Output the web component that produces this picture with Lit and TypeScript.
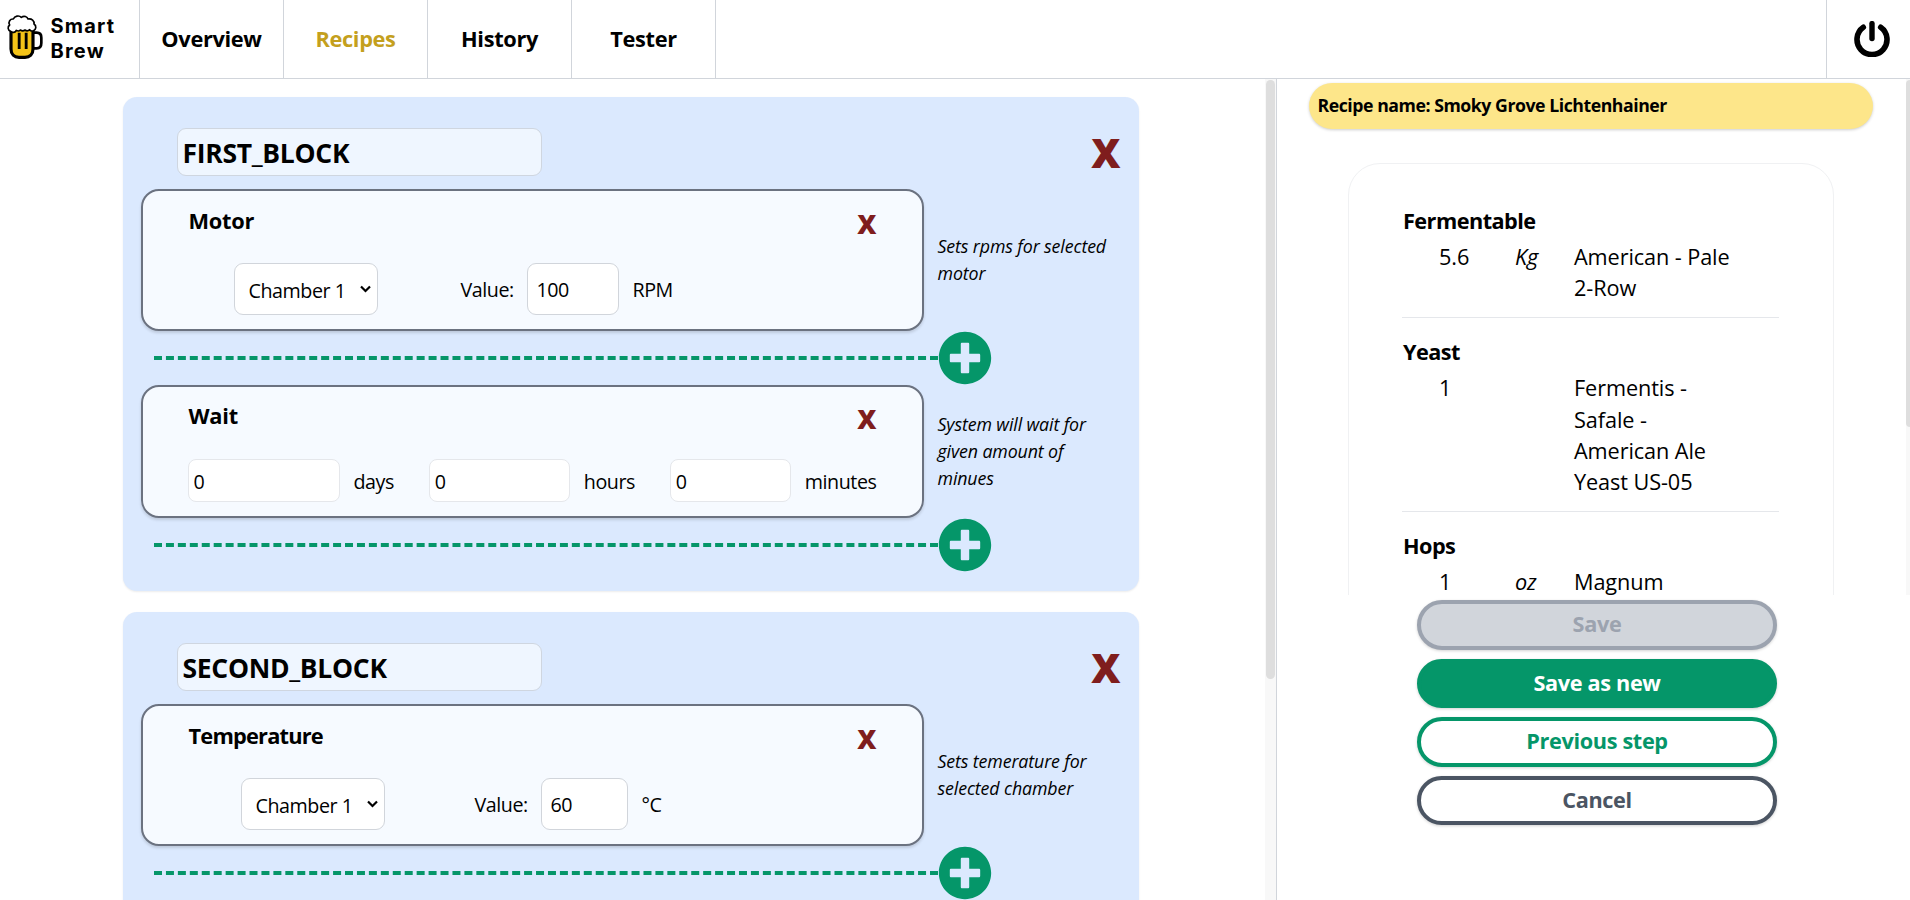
import { LitElement, html, css, svg, nothing } from "lit";
import { customElement, property } from "lit/decorators.js";
import { classMap } from "lit/directives/class-map.js";

type Field = { value: string; unit: string; size: string };
type Step = {
  title: string;
  kind: "motor" | "temperature" | "wait";
  note: string;
  fields: Field[];
};
type Block = { name: string; steps: Step[] };
type Ingredient = { group: string; amount: string; unit: string; name: string };

const blocks: Block[] = [
  {
    name: "FIRST_BLOCK",
    steps: [
      {
        title: "Motor",
        kind: "motor",
        note: "Sets rpms for selected motor",
        fields: [{ value: "100", unit: "RPM", size: "l" }],
      },
      {
        title: "Wait",
        kind: "wait",
        note: "System will wait for given amount of minues",
        fields: [
          { value: "0", unit: "days", size: "l" },
          { value: "0", unit: "hours", size: "m" },
          { value: "0", unit: "minutes", size: "s" },
        ],
      },
    ],
  },
  {
    name: "SECOND_BLOCK",
    steps: [
      {
        title: "Temperature",
        kind: "temperature",
        note: "Sets temerature for selected chamber",
        fields: [{ value: "60", unit: "°C", size: "s" }],
      },
    ],
  },
];

const ingredients: Ingredient[] = [
  { group: "Fermentable", amount: "5.6", unit: "Kg", name: "American - Pale 2-Row" },
  { group: "Yeast", amount: "1", unit: "", name: "Fermentis - Safale - American Ale Yeast US-05" },
  { group: "Hops", amount: "1", unit: "oz", name: "Magnum" },
];

const mug = svg`
  <path d="M102 98 h8 c9 0 14 6 14 15 v16 c0 10 -5 16 -14 16 h-10" fill="none" stroke="#000" stroke-width="8"/>
  <path d="M33 84 h66 v63 c0 16 -10 25 -24 25 h-18 c-14 0 -24 -9 -24 -25 z" fill="#f3c318" stroke="#000" stroke-width="9.500"/>
  <path d="M57.500 98 v49 M78.500 98 v49" fill="none" stroke="#000" stroke-width="8.500"/>
  <path d="M32 94 c-9 -3 -10 -14 -3 -19 c-6 -9 2 -19 11 -18 c4 -9 17 -12 24 -5 c8 -6 18 -2 20 5 c11 -2 20 6 18 15 c8 5 7 17 -2 20 c-5 2 -9 0 -11 -3 c-4 4 -10 4 -14 1 c-5 4 -10 3 -14 0 c-4 4 -9 3 -12 1 c-3 7 -12 8 -17 3 z" fill="#fff" stroke="#000" stroke-width="5" stroke-linejoin="round"/>`;

@customElement("app-header")
class AppHeader extends LitElement {
  static styles = css`
    :host {
      display: flex;
      height: 78px;
      border-bottom: 1px solid #d1d5db;
      background: #fff;
    }
    .logo {
      box-sizing: border-box;
      display: flex;
      align-items: flex-start;
      width: 140px;
      padding-top: 13px;
      border-right: 1px solid #d1d5db;
    }
    .logo svg {
      width: 44px;
      height: 48px;
    }
    .brand {
      margin: 1px 0 0 6.500px;
      font: 700 20px/25px Inter, sans-serif;
      letter-spacing: 1.200px;
    }
    .tab {
      box-sizing: border-box;
      width: 144px;
      border-right: 1px solid #d1d5db;
      line-height: 77px;
      text-align: center;
      font-weight: 700;
      font-size: 21.800px;
      letter-spacing: -0.350px;
    }
    .active {
      color: #c4a01d;
    }
    .power {
      display: flex;
      align-items: flex-start;
      margin-left: auto;
      width: 83px;
      border-left: 1px solid #d1d5db;
    }
    .power svg {
      width: 36px;
      height: 36px;
      margin: 21px 0 0 27px;
    }
  `;
  render() {
    return html`
      <div class="logo">
        <svg viewBox="0 39 132 144">${mug}</svg>
        <p class="brand">Smart<br />Brew</p>
      </div>
      ${["Overview", "Recipes", "History", "Tester"].map(
        (t) => html`<div class=${classMap({ tab: true, active: t === "Recipes" })}>${t}</div>`
      )}
      <div class="power">
        <svg viewBox="0 0 36 36" fill="none" stroke="#000" stroke-linecap="round">
          <path d="M9.300 6.300 A15 15 0 1 0 26.700 6.300" stroke-width="5.600" />
          <path d="M18 2.600 V17.500" stroke-width="5.400" />
        </svg>
      </div>
    `;
  }
}

@customElement("step-row")
class StepRow extends LitElement {
  @property({ attribute: false }) step!: Step;
  static styles = css`
    :host {
      display: block;
    }
    .top {
      display: flex;
      align-items: center;
    }
    .card {
      box-sizing: border-box;
      width: 783px;
      height: 142px;
      padding: 12px 45px 0;
      border: 2px solid #6b7280;
      border-radius: 18px;
      background: #f6faff;
      box-shadow: 0 2px 3px rgba(0, 0, 0, 0.14);
    }
    .card.wait {
      height: 133px;
      padding-top: 11px;
    }
    .head {
      display: flex;
      justify-content: space-between;
      height: 36px;
      padding-left: 1px;
      line-height: 35px;
      font-weight: 700;
      font-size: 21.800px;
      letter-spacing: -0.250px;
    }
    .temperature .head {
      letter-spacing: -0.800px;
    }
    .remove {
      color: #7f1d1d;
      font-weight: 800;
      font-size: 26.600px;
      line-height: 43px;
      letter-spacing: 0;
    }
    .fields {
      display: flex;
      align-items: center;
      margin-top: 24px;
      font-size: 19.700px;
      letter-spacing: -0.450px;
    }
    .motor .fields {
      padding-left: 46px;
    }
    .temperature .fields {
      padding-left: 53px;
    }
    .wait .fields {
      justify-content: space-between;
      margin-top: 25px;
    }
    .select {
      box-sizing: border-box;
      display: flex;
      align-items: center;
      justify-content: space-between;
      width: 144px;
      height: 52px;
      padding: 2px 6px 0 14px;
      border: 1px solid #d1d5db;
      border-radius: 9px;
      background: #fff;
    }
    .select svg {
      width: 11px;
      height: 8px;
      margin-bottom: 3px;
    }
    .label {
      width: 53px;
      margin: 0 13px 0 83px;
      white-space: nowrap;
    }
    .temperature .label {
      margin: 0 13px 0 90px;
    }
    .field {
      display: flex;
      align-items: center;
      gap: 14px;
    }
    input {
      box-sizing: border-box;
      height: 52px;
      margin: 0;
      padding: 0 9px;
      border: 1px solid #d1d5db;
      border-radius: 9px;
      background: #fff;
      color: #000;
      font: inherit;
      letter-spacing: inherit;
      outline: none;
    }
    .l {
      width: 92px;
    }
    .s {
      width: 87px;
    }
    .wait input {
      height: 43px;
      padding: 1px 5px 0;
      border-color: #e5e7eb;
      border-radius: 8px;
    }
    .wait .field span {
      padding-top: 1px;
    }
    .wait .l {
      width: 152px;
    }
    .wait .m {
      width: 141px;
    }
    .wait .s {
      width: 121px;
    }
    .note {
      width: 178px;
      margin: 0 0 0 14px;
      font-size: 17.800px;
      line-height: 27px;
      font-style: italic;
      letter-spacing: -0.120px;
    }
    .add {
      display: flex;
      align-items: center;
      height: 54px;
      padding-left: 13px;
    }
    .dash {
      width: 784px;
      border-top: 4px dashed #059669;
    }
    .add svg {
      width: 54px;
      height: 54px;
      fill: #059669;
    }
  `;
  render() {
    const { title, kind, note, fields } = this.step;
    return html`
      <div class="top">
        <div class="card ${kind}">
          <div class="head"><span>${title}</span><span class="remove">X</span></div>
          <div class="fields">
            ${kind === "wait"
              ? nothing
              : html`<div class="select">
                    <span>Chamber 1</span>
                    <svg viewBox="0 0 11 8" fill="none" stroke="#000" stroke-width="2.200">
                      <path d="M1 1.500 L5.500 6 L10 1.500" />
                    </svg>
                  </div>
                  <span class="label">Value:</span>`}
            ${fields.map(
              (f) => html`<div class="field"><input class=${f.size} .value=${f.value} /><span>${f.unit}</span></div>`
            )}
          </div>
        </div>
        <p class="note">${note}</p>
      </div>
      <div class="add">
        <div class="dash"></div>
        <svg viewBox="0 0 512 512">
          <path
            d="M256 8C119 8 8 119 8 256s111 248 248 248 248-111 248-248S393 8 256 8zm144 276c0 6.600-5.400 12-12 12h-92v92c0 6.600-5.400 12-12 12h-56c-6.600 0-12-5.400-12-12v-92h-92c-6.600 0-12-5.400-12-12v-56c0-6.600 5.400-12 12-12h92v-92c0-6.600 5.400-12 12-12h56c6.600 0 12 5.400 12 12v92h92c6.600 0 12 5.400 12 12v56z"
          />
        </svg>
      </div>
    `;
  }
}

@customElement("recipe-panel")
class RecipePanel extends LitElement {
  static styles = css`
    :host {
      display: flex;
      flex-direction: column;
      min-height: 0;
    }
    .info {
      display: flex;
      height: 516px;
      overflow: hidden;
    }
    .content {
      flex: 1;
      padding-top: 4px;
    }
    .name {
      box-sizing: border-box;
      width: 564px;
      height: 46px;
      margin-left: 31.500px;
      padding-left: 9px;
      border-radius: 23px;
      background: #fde68a;
      box-shadow: 0 1px 3px rgba(0, 0, 0, 0.2);
      font-weight: 700;
      font-size: 17.700px;
      line-height: 45px;
      letter-spacing: -0.460px;
    }
    .list {
      box-sizing: border-box;
      width: 486px;
      height: 600px;
      margin: 34px 0 0 71px;
      padding: 23px 54px 0 53px;
      border: 1px solid #f0f1f3;
      border-radius: 32px;
    }
    .group {
      padding: 17.500px 0 13.500px;
      border-bottom: 1px solid #e5e7eb;
      font-size: 21.700px;
      line-height: 31.400px;
    }
    .group h3 {
      margin: 0 0 5px;
      padding-left: 1px;
      font-size: inherit;
      font-weight: 700;
      letter-spacing: -0.550px;
    }
    .line {
      display: grid;
      grid-template-columns: 76px 59px 165px;
      padding-left: 37px;
      letter-spacing: -0.100px;
    }
    .unit {
      font-style: italic;
    }
    .track {
      width: 4px;
      background: #f8f8f8;
    }
    .thumb {
      height: 347px;
      margin-top: 1px;
      border-radius: 5px 0 0 5px;
      background: #dedede;
    }
    .buttons {
      display: flex;
      flex-direction: column;
      gap: 9px;
      width: 360px;
      margin: 5px 0 0 140px;
    }
    button {
      box-sizing: border-box;
      height: 49.500px;
      padding: 0 0 1px;
      border: 4px solid;
      border-radius: 25px;
      background: #fff;
      box-shadow: 0 1px 3px rgba(0, 0, 0, 0.18);
      font: inherit;
      font-weight: 700;
      font-size: 21.700px;
      line-height: 1;
      letter-spacing: -0.350px;
    }
    .save {
      border-color: #9ca3af;
      background: #d1d5db;
      color: #9ca3af;
    }
    .new {
      border-color: #059669;
      background: #059669;
      color: #fff;
    }
    .prev {
      border-color: #059669;
      color: #059669;
    }
    .cancel {
      border-color: #4b5563;
      color: #4b5563;
    }
  `;
  render() {
    return html`
      <div class="info">
        <div class="content">
          <div class="name">Recipe name: Smoky Grove Lichtenhainer</div>
          <div class="list">
            ${ingredients.map(
              (i) => html`<div class="group">
                <h3>${i.group}</h3>
                <div class="line"><span>${i.amount}</span><span class="unit">${i.unit}</span><span>${i.name}</span></div>
              </div>`
            )}
          </div>
        </div>
        <div class="track"><div class="thumb"></div></div>
      </div>
      <div class="buttons">
        <button class="save">Save</button>
        <button class="new">Save as new</button>
        <button class="prev">Previous step</button>
        <button class="cancel">Cancel</button>
      </div>
    `;
  }
}

@customElement("app-root")
class AppRoot extends LitElement {
  static styles = css`
    :host {
      display: flex;
      flex-direction: column;
      width: 100%;
      height: 900px;
      overflow: hidden;
      background: #fff;
      color: #000;
      font-family: "Open Sans", "Noto Sans", sans-serif;
      font-weight: 400;
    }
    .body {
      display: flex;
      height: 821px;
    }
    .left {
      display: flex;
      width: 1276px;
      border-right: 1px solid #d1d5db;
    }
    .blocks {
      width: 1265px;
      height: 821px;
      overflow: hidden;
    }
    .block {
      box-sizing: border-box;
      width: 1016px;
      margin: 18px 0 21px 122.500px;
      padding: 31px 18px 19px;
      border-radius: 14px;
      background: #dbe9fe;
      box-shadow: 0 1px 2px rgba(0, 0, 0, 0.08);
    }
    .block + .block {
      margin-top: 0;
      padding-bottom: 60px;
    }
    .title {
      display: flex;
      justify-content: space-between;
      align-items: center;
      height: 48px;
      margin-bottom: 13px;
      padding-left: 36px;
    }
    .title input {
      box-sizing: border-box;
      width: 365px;
      height: 48px;
      margin: 0;
      padding: 1px 5px 0;
      border: 1px solid #cfd6e0;
      border-radius: 9px;
      background: #eff6ff;
      color: #000;
      font: inherit;
      font-weight: 700;
      font-size: 26.500px;
      letter-spacing: -0.300px;
      outline: none;
    }
    .delete {
      padding-top: 2px;
      color: #7f1d1d;
      font-weight: 800;
      font-size: 40.500px;
      line-height: 48px;
    }
    .track {
      flex: 1;
      background: #f8f8f8;
    }
    .thumb {
      width: 9px;
      height: 599px;
      margin: 1px 0 0 1px;
      border-radius: 5px;
      background: #dedede;
    }
    recipe-panel {
      flex: 1;
    }
  `;
  render() {
    return html`
      <app-header></app-header>
      <div class="body">
        <div class="left">
          <div class="blocks">
            ${blocks.map(
              (b) => html`<section class="block">
                <div class="title"><input .value=${b.name} /><span class="delete">X</span></div>
                ${b.steps.map((s) => html`<step-row .step=${s}></step-row>`)}
              </section>`
            )}
          </div>
          <div class="track"><div class="thumb"></div></div>
        </div>
        <recipe-panel></recipe-panel>
      </div>
    `;
  }
}
